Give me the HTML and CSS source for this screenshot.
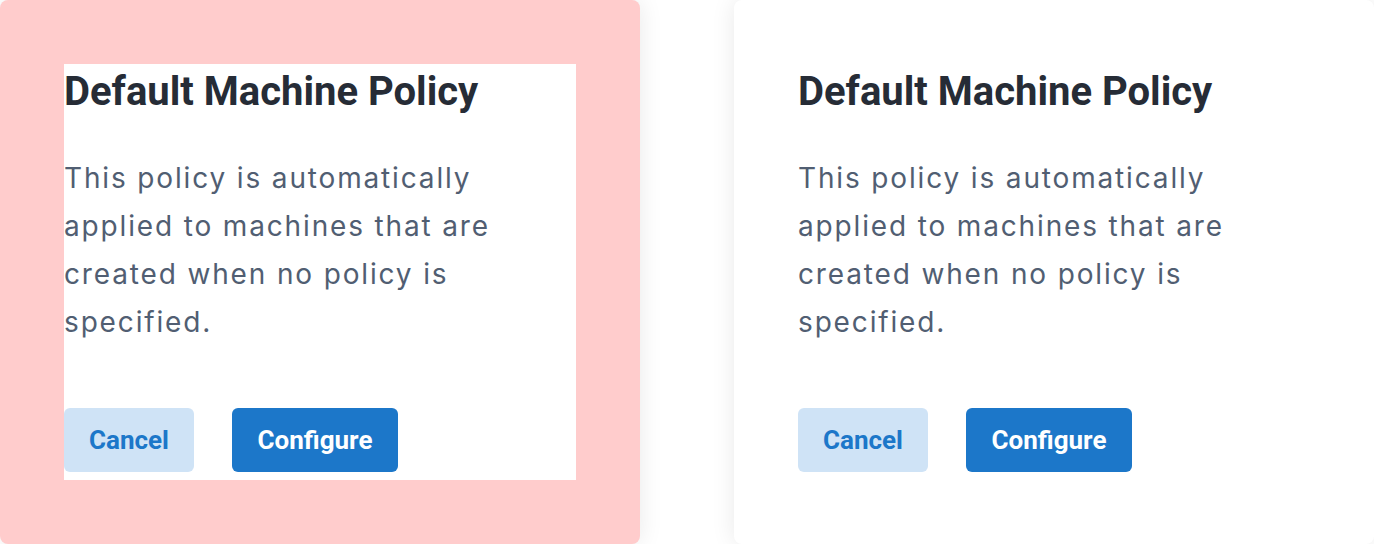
FILE: index.html
```html
<!DOCTYPE html>
<html>
<head>
<meta charset="utf-8">
<link rel="stylesheet" href="styles.css">
</head>
<body>
<div class="row">
  <div class="card card--highlight">
    <div class="content">
      <h2 class="title">Default Machine Policy</h2>
      <p class="desc">This policy is automatically applied to machines that are created when no policy is specified.</p>
      <div class="actions">
        <button class="btn btn--secondary">Cancel</button>
        <button class="btn btn--primary">Configure</button>
      </div>
    </div>
  </div>
  <div class="card">
    <div class="content">
      <h2 class="title">Default Machine Policy</h2>
      <p class="desc">This policy is automatically applied to machines that are created when no policy is specified.</p>
      <div class="actions">
        <button class="btn btn--secondary">Cancel</button>
        <button class="btn btn--primary">Configure</button>
      </div>
    </div>
  </div>
</div>
</body>
</html>
```
FILE: styles.css
```css
* { box-sizing: border-box; }
html, body { margin: 0; padding: 0; background: #ffffff; }
body { width: 1374px; height: 544px; overflow: hidden; }
.row {
  display: flex;
  gap: 94px;
}
.card {
  width: 640px;
  flex: none;
  height: 544px;
  padding: 64px;
  background: #ffffff;
  border-radius: 8px;
  box-shadow: 0 0 24px rgba(0, 0, 0, 0.09);
}
.card--highlight { background: #ffcccc; }
.content {
  background: #ffffff;
  height: 416px;
  display: flex;
  flex-direction: column;
}
.title {
  margin: 0;
  font-family: Roboto, "Liberation Sans", sans-serif;
  font-weight: 700;
  font-size: 40px;
  line-height: 56px;
  color: #262c36;
}
.desc {
  margin: 34px 0 0;
  font-family: Inter, "Noto Sans", sans-serif;
  font-size: 28px;
  line-height: 48px;
  letter-spacing: 1.85px;
  color: #515e72;
}
.actions {
  margin-top: auto;
  margin-bottom: 8px;
  display: flex;
  gap: 38px;
}
.btn {
  height: 64px;
  border: 0;
  border-radius: 6px;
  font-family: Roboto, "Liberation Sans", sans-serif;
  font-weight: 700;
  font-size: 26px;
  padding: 0;
}
.btn--secondary { background: #cfe3f6; color: #1c77c9; width: 130px; }
.btn--primary { background: #1c77c9; color: #ffffff; width: 166px; }
```
